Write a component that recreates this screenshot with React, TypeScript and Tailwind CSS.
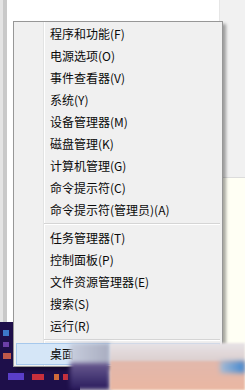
const groups: string[][] = [
  [
    '程序和功能(F)',
    '电源选项(O)',
    '事件查看器(V)',
    '系统(Y)',
    '设备管理器(M)',
    '磁盘管理(K)',
    '计算机管理(G)',
    '命令提示符(C)',
    '命令提示符(管理员)(A)',
  ],
  ['任务管理器(T)', '控制面板(P)', '文件资源管理器(E)', '搜索(S)', '运行(R)'],
]

function Item({ label, active }: { label: string; active?: boolean }) {
  return (
    <div
      className={`flex h-[22px] items-center mx-[2px] border ${
        active ? 'bg-[#d5e6f7] border-[#a6c8ec]' : 'border-transparent'
      }`}
    >
      <div className="w-[28px] shrink-0" />
      <span className="pl-[5px] text-[12px] text-[#0a0a0a] leading-none">{label}</span>
    </div>
  )
}

function Separator() {
  return (
    <div className="flex h-[6px] items-center pl-[30px] pr-[2px]">
      <div className="flex-1">
        <div className="h-px bg-[#d5d5d5]" />
        <div className="h-px bg-white" />
      </div>
    </div>
  )
}

export default function App() {
  return (
    <div
      className="relative w-[245px] h-[390px] overflow-hidden bg-white"
      style={{ fontFamily: '"Noto Sans CJK SC", "Microsoft YaHei", sans-serif' }}
    >
      {/* desktop behind the menu */}
      <div className="flex flex-col h-full">
        <div className="flex h-[322px]">
          <div className="w-[3px] bg-[#e4e4e4]" />
          <div className="w-[4px] bg-[#c9c9c9]" />
          <div className="w-[212px] bg-white" />
          <div className="w-px bg-[#e6e6e6]" />
          <div className="flex-1 flex flex-col">
            <div className="h-[177px] bg-[#f1f1f1]" />
            <div className="h-px bg-[#dcdcdc]" />
            <div className="flex-1 bg-[#fffff4]" />
          </div>
        </div>
        <div className="flex flex-1">
          {/* taskbar strip */}
          <div className="w-[80px] bg-[#1e0f4a] flex flex-col gap-[6px] pt-[8px] pl-[3px]">
            <div className="w-[6px] h-[6px] bg-[#3c78c8]" />
            <div className="w-[6px] h-[5px] bg-[#6b3fa8]" />
            <div className="w-[8px] h-[6px] bg-[#c0584a]" />
            <div className="flex items-end gap-[4px] mt-[8px] pl-[5px]">
              <div className="w-[16px] h-[7px] bg-[#5a3ec8]" />
              <div className="w-[12px] h-[6px] bg-[#c8303c] ml-[4px]" />
              <div className="w-[5px] h-[6px] bg-[#d06a3a] ml-[6px]" />
              <div className="w-[5px] h-[6px] bg-[#c8303c]" />
            </div>
          </div>
          <div className="flex-1 bg-[#fffff4]" />
        </div>
      </div>

      {/* context menu */}
      <div className="absolute left-[13px] top-[21px] w-[210px] border border-[#979797] bg-[#f0f0f0] shadow-[3px_3px_3px_rgba(0,0,0,0.35)]">
        <div className="relative py-[1px]">
          <div className="absolute left-[29px] top-0 bottom-0 w-px bg-[#e2e3e3]" />
          <div className="absolute left-[30px] top-0 bottom-0 w-px bg-white" />
          <div className="relative">
            {groups[0].map((label) => (
              <Item key={label} label={label} />
            ))}
            <Separator />
            {groups[1].map((label) => (
              <Item key={label} label={label} />
            ))}
            <Separator />
            <Item label="桌面(D)" active />
          </div>
        </div>
      </div>

      {/* blurred watermark overlay */}
      <div className="absolute left-[70px] top-[343px] w-[175px] h-[47px] flex">
        <div className="w-[40px] flex flex-col blur-[2px]">
          <div className="h-[20px] bg-gradient-to-r from-[#c7cddd] to-[#a9adc0]" />
          <div className="flex-1 bg-gradient-to-b from-[#6a5a90] to-[#2a1a5c]" />
        </div>
        <div className="flex-1 flex flex-col blur-[1px]">
          <div className="h-[18px] bg-gradient-to-b from-[#e7e3e6] to-[#dccfcf]" />
          <div className="flex-1 flex bg-gradient-to-b from-[#e2b8ac] to-[#eab7a2]">
            <div className="flex-1" />
            <div className="w-[25px] h-[12px] bg-gradient-to-r from-[#a8bcd4] to-[#3d86cf] blur-[2px]" />
          </div>
        </div>
      </div>
    </div>
  )
}
